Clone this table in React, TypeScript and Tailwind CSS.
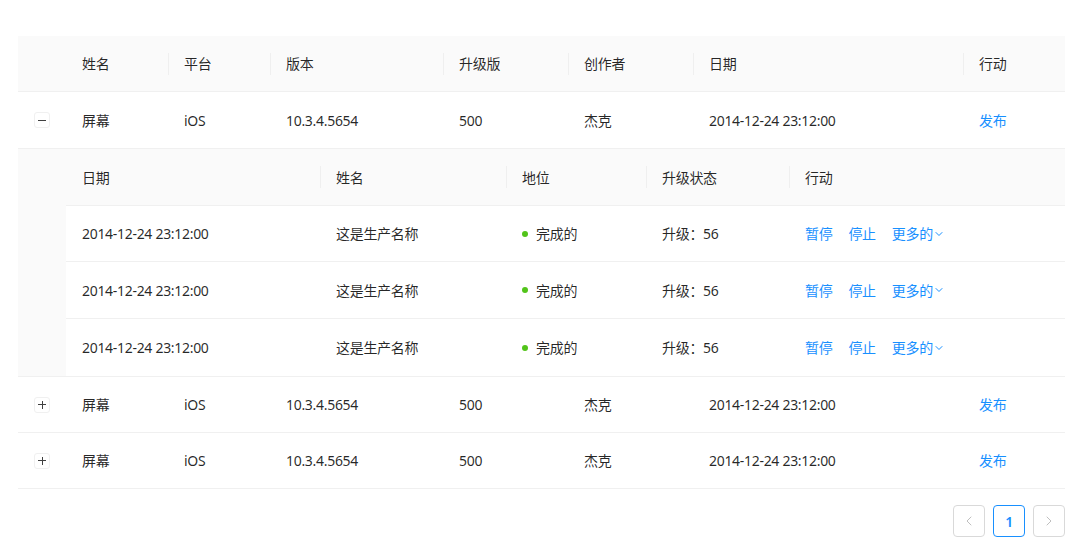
import { ChevronDown, ChevronLeft, ChevronRight } from "lucide-react"

const font = "font-['Noto_Sans','Noto_Sans_CJK_SC',sans-serif]"

const mainCols = "grid grid-cols-[48px_102px_102px_173px_125px_125px_270px_102px]"
const subCols = "grid grid-cols-[254px_186px_140px_143px_276px]"

const mainHead = ["姓名", "平台", "版本", "升级版", "创作者", "日期", "行动"]
const subHead = ["日期", "姓名", "地位", "升级状态", "行动"]

function HeadCell({ label, sep }: { label: string; sep: boolean }) {
  return (
    <div className="relative flex items-center px-4">
      {sep && <span className="absolute left-0 top-1/2 h-[22px] w-px -translate-y-1/2 bg-[#efefef]" />}
      {label}
    </div>
  )
}

function ExpandIcon({ open }: { open: boolean }) {
  return (
    <div className="flex items-center justify-center">
      <span className="relative flex h-4 w-4 items-center justify-center rounded-[3px] border border-[#f0f0f0] bg-white">
        <span className="absolute h-px w-[8px] bg-[#404040]" />
        {!open && <span className="absolute h-[8px] w-px bg-[#404040]" />}
      </span>
    </div>
  )
}

function MainRow({ open, h }: { open: boolean; h: string }) {
  return (
    <div className={`${mainCols} ${h} border-b border-[#f0f0f0] bg-white`}>
      <ExpandIcon open={open} />
      <div className="flex items-center px-4">屏幕</div>
      <div className="flex items-center px-4">iOS</div>
      <div className="flex items-center px-4">10.3.4.5654</div>
      <div className="flex items-center px-4">500</div>
      <div className="flex items-center px-4">杰克</div>
      <div className="flex items-center px-4">2014-12-24 23:12:00</div>
      <div className="flex items-center px-4 text-[#1890ff]">发布</div>
    </div>
  )
}

function SubRow({ h, last }: { h: string; last?: boolean }) {
  return (
    <div className={`${subCols} ${h} ${last ? "" : "border-b border-[#f0f0f0]"} bg-white`}>
      <div className="flex items-center px-4">2014-12-24 23:12:00</div>
      <div className="flex items-center px-4">这是生产名称</div>
      <div className="flex items-center gap-2 px-4">
        <span className="h-[6px] w-[6px] rounded-full bg-[#52c41a]" />
        完成的
      </div>
      <div className="flex items-center px-4">升级：56</div>
      <div className="flex items-center gap-4 px-4 text-[#1890ff]">
        <span>暂停</span>
        <span>停止</span>
        <span className="flex items-center">
          更多的
          <ChevronDown className="h-3 w-3" strokeWidth={2} />
        </span>
      </div>
    </div>
  )
}

export default function App() {
  return (
    <div className={`${font} min-h-[547px] bg-white pt-[36px] text-[14px] tracking-[-0.3px] text-[#000000d9]`}>
      <div className="ml-[18px] w-[1047px]">
        <div className={`${mainCols} h-[56px] border-b border-[#f0f0f0] bg-[#fafafa]`}>
          <div />
          {mainHead.map((l, i) => (
            <HeadCell key={l} label={l} sep={i > 0} />
          ))}
        </div>

        <MainRow open h="h-[57px]" />

        <div className="flex border-b border-[#f0f0f0] bg-[#fafafa]">
          <div className="w-[48px]" />
          <div className="flex-1">
            <div className={`${subCols} h-[57px] border-b border-[#f0f0f0] bg-[#fafafa]`}>
              {subHead.map((l, i) => (
                <HeadCell key={l} label={l} sep={i > 0} />
              ))}
            </div>
            <SubRow h="h-[56px]" />
            <SubRow h="h-[57px]" />
            <SubRow h="h-[57px]" last />
          </div>
        </div>

        <MainRow open={false} h="h-[56px]" />
        <MainRow open={false} h="h-[56px]" />

        <div className="mt-4 flex justify-end gap-2">
          <button className="flex h-8 w-8 items-center justify-center rounded-[4px] border border-[#d9d9d9] text-[#bfbfbf]">
            <ChevronLeft className="h-4 w-4" strokeWidth={1.5} />
          </button>
          <button className="flex h-8 w-8 items-center justify-center rounded-[4px] border border-[#1890ff] font-semibold text-[#1890ff]">
            1
          </button>
          <button className="flex h-8 w-8 items-center justify-center rounded-[4px] border border-[#d9d9d9] text-[#bfbfbf]">
            <ChevronRight className="h-4 w-4" strokeWidth={1.5} />
          </button>
        </div>
      </div>
    </div>
  )
}
